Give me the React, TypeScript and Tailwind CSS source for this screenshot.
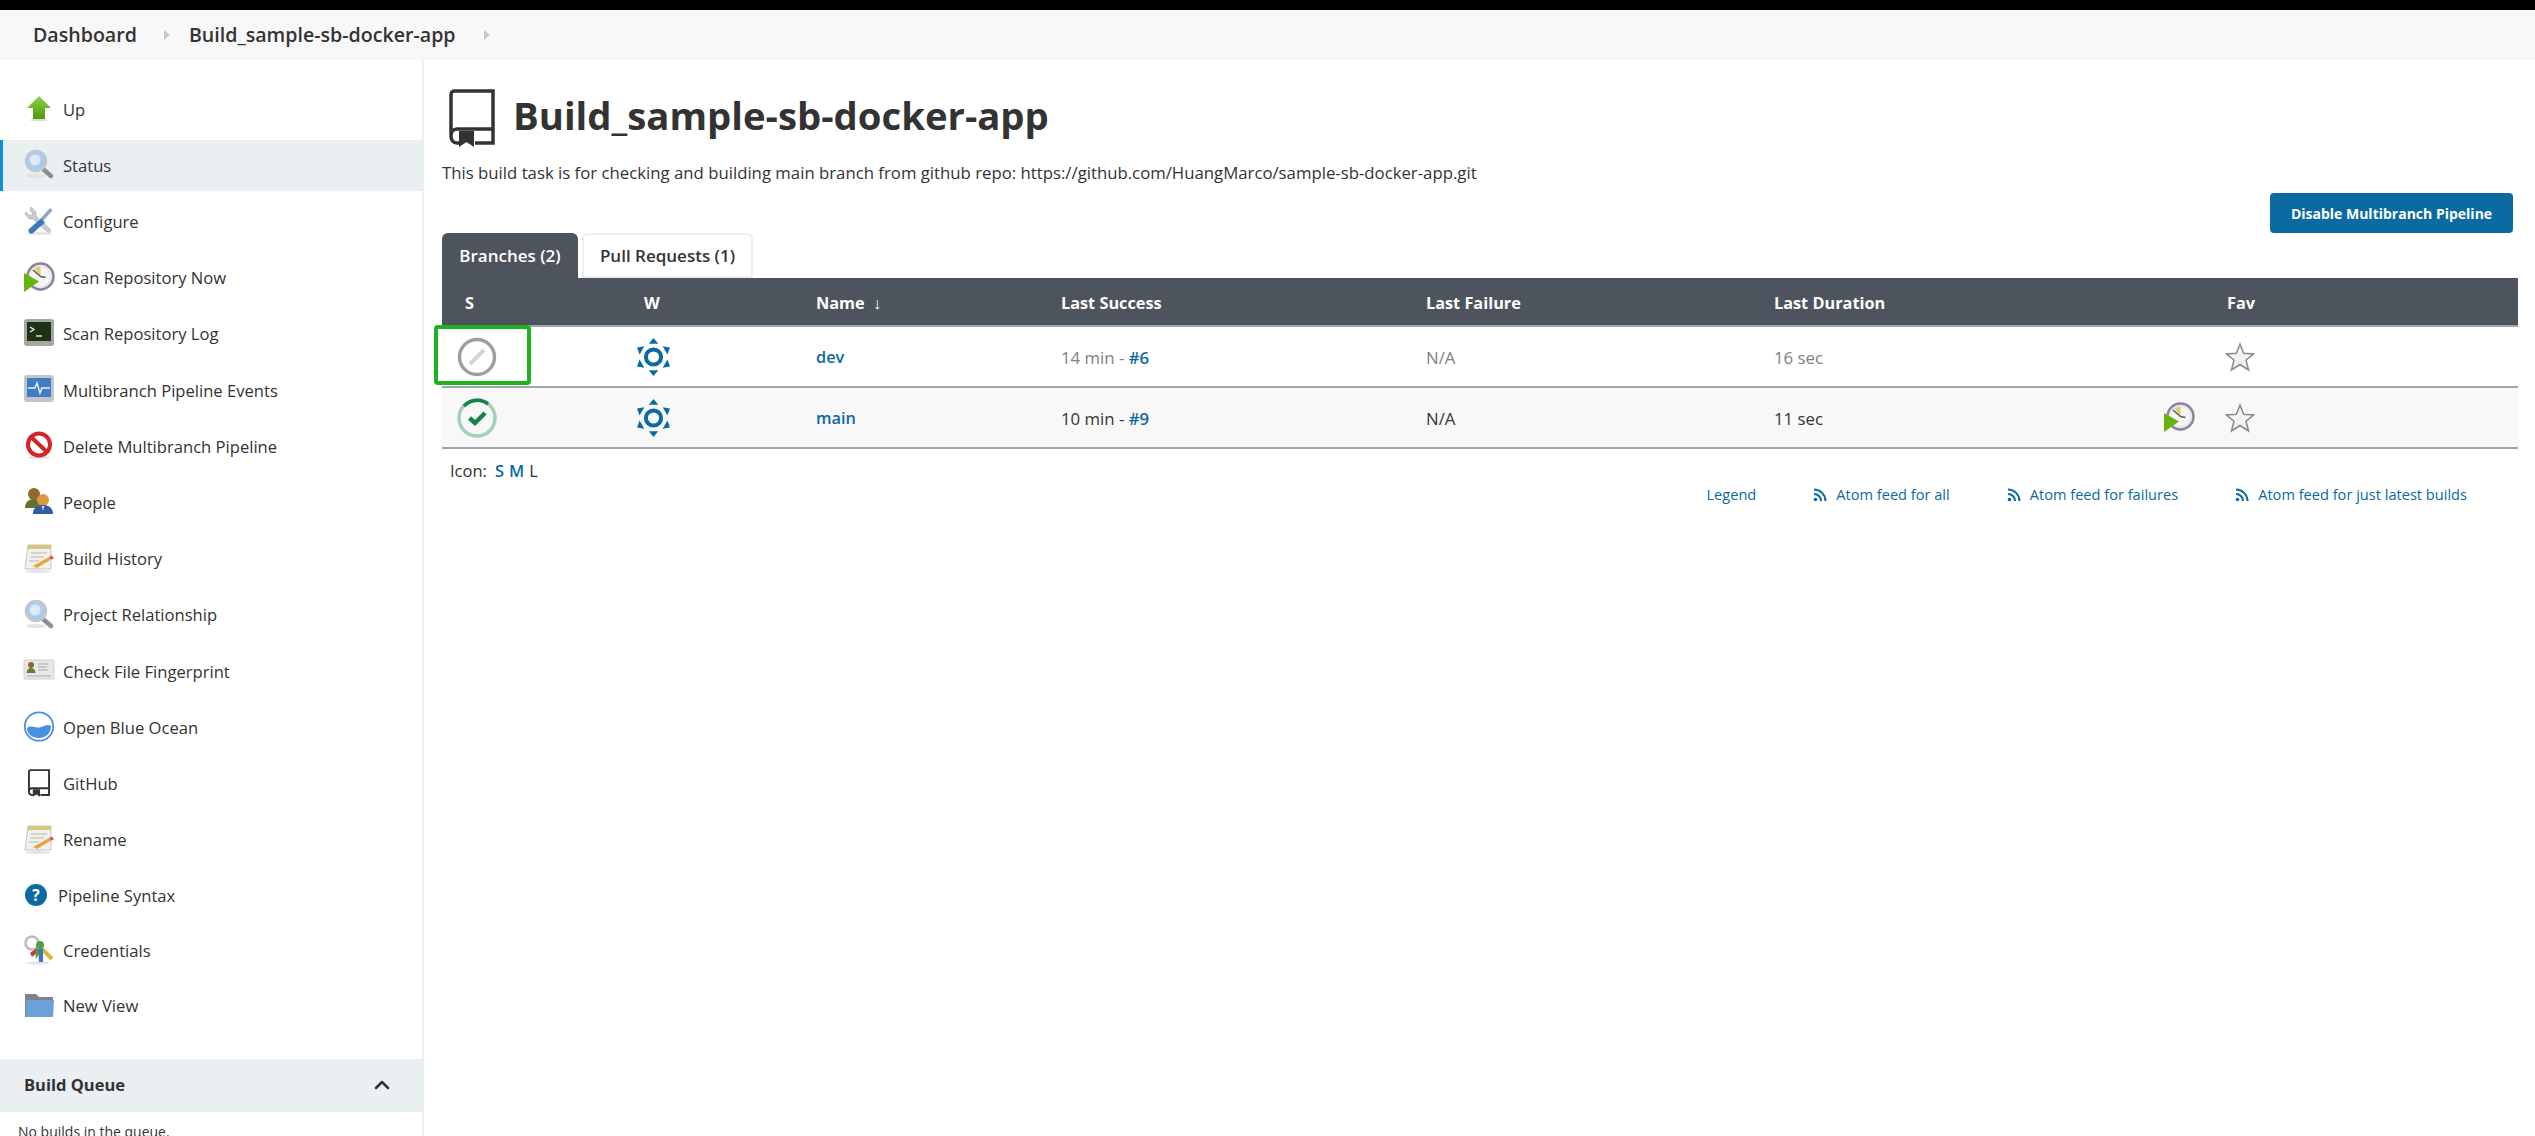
import type { ReactNode } from "react";
import { ChevronUp } from "lucide-react";

const font = "font-['Open_Sans',sans-serif]";

function Up() {
  return (
    <svg viewBox="0 0 32 32" className="h-8 w-8">
      <defs>
        <linearGradient id="up" x1="0" y1="0" x2="0" y2="1">
          <stop offset="0" stopColor="#8fd14f" />
          <stop offset="1" stopColor="#4e9a06" />
        </linearGradient>
      </defs>
      <ellipse cx="16" cy="27" rx="9" ry="1.5" fill="#ddd" />
      <path d="M16 3 28 15h-6v11H10V15H4z" fill="url(#up)" />
    </svg>
  );
}

function Search() {
  return (
    <svg viewBox="0 0 32 32" className="h-8 w-8">
      <ellipse cx="13" cy="27" rx="10" ry="2" fill="#e0e2e4" />
      <path d="M20 20l8 7" stroke="#8a8f94" strokeWidth="4.5" strokeLinecap="round" />
      <circle cx="13" cy="12" r="10" fill="#a9cbee" stroke="#c3c7ca" strokeWidth="2.5" />
      <circle cx="12" cy="11" r="5.5" fill="#dcebf9" />
    </svg>
  );
}

function Tools() {
  return (
    <svg viewBox="0 0 32 32" className="h-8 w-8">
      <ellipse cx="16" cy="28.5" rx="13" ry="1.5" fill="#e2e2e2" />
      <path d="M8 2l5 5v4L28 25l-2.5 3L10 14H6L2 9l1-2 4 4 3-2-3-4z" fill="#c9ccce" stroke="#a4a8ab" strokeWidth="0.6" />
      <path d="M27 3l2.5 2.5L20 16l-2.5-2.5z" fill="#8fa6bc" />
      <path d="M18 13.5l4 4L10 28c-2.5 2-6-1.5-4-4z" fill="#3b78b8" />
    </svg>
  );
}

function Clock() {
  return (
    <svg viewBox="0 0 32 32" className="h-8 w-8">
      <circle cx="17.5" cy="14.5" r="13" fill="#e9e7ec" stroke="#8d7f9e" strokeWidth="2.4" />
      <circle cx="17.5" cy="14.5" r="9.5" fill="#f6f6f6" />
      <path d="M17.5 14.5V4.5a10 10 0 0 0-6 2z" fill="#e3cd72" />
      <path d="M17.5 14.5 10 8M17.5 14.5l5 1" stroke="#5a5a5a" strokeWidth="1.5" />
      <path d="M1 11l15 8.5L1 30z" fill="#66b50f" />
    </svg>
  );
}

function Terminal() {
  return (
    <svg viewBox="0 0 32 32" className="h-8 w-8">
      <rect x="1" y="1" width="30" height="27" rx="3" fill="#a3a6a2" />
      <rect x="4" y="4" width="24" height="19" fill="#1e3315" />
      <path d="M7 9l4 2.5-4 2.5" fill="none" stroke="#e8efe4" strokeWidth="1.4" />
      <path d="M13 18h6" stroke="#e8efe4" strokeWidth="1.4" />
      <rect x="22" y="25" width="2" height="1.5" fill="#8fd14f" />
    </svg>
  );
}

function Monitor() {
  return (
    <svg viewBox="0 0 32 32" className="h-8 w-8">
      <rect x="1" y="1" width="30" height="27" rx="3" fill="#c3c6c9" />
      <rect x="4" y="4" width="24" height="19" fill="#3f7cc4" />
      <path d="M5 14h7l2-5 3 10 2-5h8" fill="none" stroke="#e8f2fb" strokeWidth="1.5" />
    </svg>
  );
}

function NoEntry() {
  return (
    <svg viewBox="0 0 32 32" className="h-8 w-8">
      <ellipse cx="16" cy="27.5" rx="11" ry="1.5" fill="#ddd" />
      <circle cx="16" cy="14.5" r="11" fill="#fff" stroke="#d5232a" strokeWidth="4" />
      <path d="M8 7l16 15" stroke="#d5232a" strokeWidth="4" />
    </svg>
  );
}

function People() {
  return (
    <svg viewBox="0 0 32 32" className="h-8 w-8">
      <circle cx="11" cy="8" r="6" fill="#8f6a2c" />
      <path d="M2 22c0-6 4-9 9-9s9 3 9 9z" fill="#5f7034" />
      <circle cx="20" cy="14" r="6" fill="#e0993a" />
      <path d="M10 28c0-6 4-9 10-9s10 3 10 9z" fill="#2f5f9f" />
      <path d="M19 20h2l-1 5z" fill="#fff" />
    </svg>
  );
}

function Notepad() {
  return (
    <svg viewBox="0 0 32 32" className="h-8 w-8">
      <ellipse cx="15" cy="28.5" rx="13" ry="1.5" fill="#e2e2e2" />
      <path d="M5 2h23v24H2z" fill="#f1f1ec" stroke="#c6c6c0" />
      <rect x="5" y="2" width="23" height="4" fill="#d8c57e" />
      <path d="M8 10h16M7 14h14M6 18h10" stroke="#b9b9b4" strokeWidth="1.2" />
      <path d="M10 23l16-9 2 2.5-14 8.5z" fill="#e8a53d" />
      <path d="M26 14l3-1.5 2 3-3 1z" fill="#d9534f" />
    </svg>
  );
}

function Card() {
  return (
    <svg viewBox="0 0 32 32" className="h-8 w-8">
      <rect x="1" y="5" width="30" height="19" rx="1" fill="#e8e8e6" stroke="#cfcfcd" />
      <circle cx="8" cy="10" r="3" fill="#8a6a28" />
      <path d="M3.5 18c0-3 2-5 4.5-5s4.5 2 4.5 5z" fill="#6d7a35" />
      <path d="M15 9h11M15 12h9M15 15h10M4 21h24" stroke="#a9a9a6" strokeWidth="1" />
    </svg>
  );
}

function Ocean() {
  return (
    <svg viewBox="0 0 32 32" className="h-8 w-8">
      <circle cx="16" cy="15.5" r="14.2" fill="#fff" stroke="#4a90e2" strokeWidth="1.8" />
      <path d="M4 17c5-4 9 1 14-1s7-3 10-1c0 7-5 12-12 12S4 23 4 17z" fill="#4a90e2" />
    </svg>
  );
}

function Book({ className, strokeWidth = 3.5 }: { className: string; strokeWidth?: number }) {
  return (
    <svg viewBox="0 0 46 58" className={className}>
      <path
        d="M44 40H8C4 40 2 43 2 47s2 7 6 7h2M26 54h18V2H6C3 2 2 3 2 6v41"
        fill="none"
        stroke="#333"
        strokeWidth={strokeWidth}
      />
      <path d="M10 42h15v16l-7.5-5-7.5 5z" fill="#333" />
    </svg>
  );
}

function Question() {
  return (
    <svg viewBox="0 0 24 24" className="h-[22px] w-[22px]">
      <circle cx="12" cy="12" r="12" fill="#0b6aa2" />
      <text x="12" y="18" textAnchor="middle" fontSize="17" fontWeight="700" fill="#fff" fontFamily="Open Sans">
        ?
      </text>
    </svg>
  );
}

function Keys() {
  return (
    <svg viewBox="0 0 32 32" className="h-8 w-8">
      <ellipse cx="15" cy="29" rx="12" ry="1.5" fill="#e2e2e2" />
      <circle cx="9" cy="9" r="6.5" fill="none" stroke="#b9bcbf" strokeWidth="2.5" />
      <path d="M17 13l12 12" stroke="#d9b93c" strokeWidth="4" />
      <circle cx="17" cy="11" r="4" fill="#46a546" />
      <path d="M7 19l7-5 2 3-7 6z" fill="#d9322e" />
      <path d="M12 17l3-2 1 5-3 5z" fill="#46a546" />
      <path d="M15 15h5v13h-4z" fill="#3b78b8" />
    </svg>
  );
}

function Folder() {
  return (
    <svg viewBox="0 0 32 32" className="h-8 w-8">
      <path d="M2 4h11l3 3h14v20H2z" fill="#7f8386" />
      <path d="M3 10h28l-1 17H3z" fill="#6d9fd8" />
    </svg>
  );
}

function Weather() {
  const tris = [0, 60, 120, 180, 240, 300];
  return (
    <svg viewBox="0 0 36 42" className="h-[40px] w-[35px]">
      <circle cx="18" cy="21" r="8" fill="none" stroke="#0b6aa2" strokeWidth="4.2" />
      {tris.map((a) => (
        <path key={a} d="M18 1l5 6H13z" fill="#0b6aa2" transform={`rotate(${a} 18 21)`} />
      ))}
    </svg>
  );
}

function Star() {
  return (
    <svg viewBox="0 0 30 30" className="h-[30px] w-[30px]">
      <path
        d="M15 2l3.7 9.3 10 .6-7.7 6.3 2.6 9.8-8.6-5.5L6.4 28 9 18.2 1.3 11.9l10-.6z"
        fill="#f2f2f2"
        stroke="#8a8a8a"
        strokeWidth="1.5"
      />
    </svg>
  );
}

function Rss() {
  return (
    <svg viewBox="0 0 14 14" className="h-[14px] w-[14px]" fill="none" stroke="#0b6aa2" strokeWidth="2">
      <circle cx="2.5" cy="11.5" r="1.8" fill="#0b6aa2" stroke="none" />
      <path d="M1 6a7 7 0 0 1 7 7M1 1.5A11.5 11.5 0 0 1 12.5 13" />
    </svg>
  );
}

function Crumb() {
  return (
    <svg viewBox="0 0 6 10" className="h-[10px] w-[6px]">
      <path d="M0 0l6 5-6 5z" fill="#c8c8c8" />
    </svg>
  );
}

const menu: { label: string; icon: ReactNode; active?: boolean }[] = [
  { label: "Up", icon: <Up /> },
  { label: "Status", icon: <Search />, active: true },
  { label: "Configure", icon: <Tools /> },
  { label: "Scan Repository Now", icon: <Clock /> },
  { label: "Scan Repository Log", icon: <Terminal /> },
  { label: "Multibranch Pipeline Events", icon: <Monitor /> },
  { label: "Delete Multibranch Pipeline", icon: <NoEntry /> },
  { label: "People", icon: <People /> },
  { label: "Build History", icon: <Notepad /> },
  { label: "Project Relationship", icon: <Search /> },
  { label: "Check File Fingerprint", icon: <Card /> },
  { label: "Open Blue Ocean", icon: <Ocean /> },
  { label: "GitHub", icon: <Book className="h-[28px] w-[22px]" strokeWidth={4} /> },
  { label: "Rename", icon: <Notepad /> },
];

function Sidebar() {
  return (
    <aside className="flex h-[1076px] w-[424px] shrink-0 flex-col overflow-hidden border-r-2 border-[#eaeff2] pt-[21px]">
      {menu.map((m) => (
        <div
          key={m.label}
          className={`flex h-[56.2px] shrink-0 items-center gap-[8px] pl-[23px] text-[16.6px] text-[#333] ${
            m.active ? "my-[2.6px] !h-[51px] border-l-[3px] border-[#0b8ee0] bg-[#eaeff2] !pl-[20px]" : ""
          }`}
        >
          <span className="flex h-8 w-8 items-center justify-center">{m.icon}</span>
          <span className="pt-[2px]">{m.label}</span>
        </div>
      ))}
      <div className="flex h-[55px] shrink-0 items-center gap-[11px] pl-[25px] text-[16.6px] text-[#333]">
        <Question />
        <span className="pt-[2px]">Pipeline Syntax</span>
      </div>
      <div className="flex h-[55.5px] shrink-0 items-center gap-[8px] pl-[23px] text-[16.6px] text-[#333]">
        <Keys />
        <span className="pt-[2px]">Credentials</span>
      </div>
      <div className="flex h-[55.5px] shrink-0 items-center gap-[8px] pl-[23px] text-[16.6px] text-[#333]">
        <Folder />
        <span className="pt-[2px]">New View</span>
      </div>
      <div className="mt-[25px] flex h-[53px] shrink-0 items-center justify-between bg-[#eaeff2] pl-[24px] pr-[28px]">
        <span className="text-[16.5px] font-bold text-[#333]">Build Queue</span>
        <ChevronUp className="h-[24px] w-[24px] text-[#333]" strokeWidth={2.5} />
      </div>
      <div className="pl-[18px] pt-[9px] text-[14px] text-[#333]">No builds in the queue.</div>
    </aside>
  );
}

const rows = [
  { name: "dev", status: "off", success: "14 min", run: "#6", duration: "16 sec", scan: false },
  { name: "main", status: "ok", success: "10 min", run: "#9", duration: "11 sec", scan: true },
];

function Status({ kind }: { kind: string }) {
  if (kind === "off") {
    return (
      <svg viewBox="0 0 40 40" className="h-[40px] w-[40px]">
        <circle cx="20" cy="20" r="17.5" fill="none" stroke="#9e9e9e" strokeWidth="3.5" />
        <path d="M13 27l14-14" stroke="#d6d6d6" strokeWidth="4" />
      </svg>
    );
  }
  return (
    <svg viewBox="0 0 40 40" className="h-[40px] w-[40px]">
      <circle cx="20" cy="20" r="18" fill="none" stroke="#a3d0b8" strokeWidth="3.5" />
      <path d="M7 8A18 18 0 0 1 31 6" fill="none" stroke="#138347" strokeWidth="3.5" />
      <path d="M12.5 20l5.5 5 10-10" fill="none" stroke="#138347" strokeWidth="4.5" />
    </svg>
  );
}

function BranchTable() {
  return (
    <table className="w-full table-fixed border-collapse text-[16.8px]">
      <colgroup>
        <col className="w-[202px]" />
        <col className="w-[172px]" />
        <col className="w-[245px]" />
        <col className="w-[365px]" />
        <col className="w-[348px]" />
        <col className="w-[394px]" />
        <col />
      </colgroup>
      <thead>
        <tr className="h-[48px] border-b-2 border-[#9aa7af] bg-[#4d545d] text-left text-[16.3px] font-bold text-white">
          <th className="pl-[23px] pt-[3px]">S</th>
          <th className="pt-[3px]">W</th>
          <th className="pt-[3px]">
            Name <span className="ml-[4px] font-normal">↓</span>
          </th>
          <th className="pt-[3px]">Last Success</th>
          <th className="pt-[3px]">Last Failure</th>
          <th className="pt-[3px]">Last Duration</th>
          <th className="pl-[59px] pt-[3px]">Fav</th>
        </tr>
      </thead>
      <tbody>
        {rows.map((r, i) => {
          const muted = i === 0 ? "text-[#808080]" : "text-[#333]";
          return (
            <tr key={r.name} className={`h-[61px] border-b-2 border-[#9aa7af] ${i % 2 ? "bg-[#f8f8f8]" : "bg-white"}`}>
              <td className="pl-[15px]">
                <div className="flex items-center">
                  <Status kind={r.status} />
                </div>
              </td>
              <td>
                <div className="-ml-[8px] flex">
                  <Weather />
                </div>
              </td>
              <td className="pt-[2px] text-[16.3px] font-semibold text-[#0b6aa2]">{r.name}</td>
              <td className={`pt-[2px] ${muted}`}>
                {r.success} - <span className="font-semibold text-[#0b6aa2]">{r.run}</span>
              </td>
              <td className={`pt-[2px] ${muted}`}>N/A</td>
              <td className={`pt-[2px] ${muted}`}>{r.duration}</td>
              <td>
                <div className="flex items-center justify-between">
                  <span className="-ml-[5px] flex w-[38px]">{r.scan ? <Clock /> : null}</span>
                  <span className="mr-[263px]">
                    <Star />
                  </span>
                </div>
              </td>
            </tr>
          );
        })}
      </tbody>
    </table>
  );
}

export default function App() {
  return (
    <div className={`${font} flex h-[1136px] w-[2535px] flex-col overflow-hidden bg-white`}>
      <div className="h-[10px] shrink-0 bg-black" />
      <nav className="flex h-[50px] shrink-0 items-center bg-[#f8f8f8] pl-[33px] text-[19.6px] font-semibold text-[#333]">
        <span>Dashboard</span>
        <span className="ml-[27px] mr-[19px] flex">
          <Crumb />
        </span>
        <span>Build_sample-sb-docker-app</span>
        <span className="ml-[28px] flex">
          <Crumb />
        </span>
      </nav>
      <div className="flex min-h-0 flex-1">
        <Sidebar />
        <main className="relative min-w-0 flex-1 pl-[18px] pr-[17px]">
          <div className="flex items-center gap-[18px] pl-[7px] pt-[29px]">
            <Book className="h-[58px] w-[46px]" />
            <h1 className="mb-[6px] text-[38.3px] font-bold leading-[52px] text-[#333]">Build_sample-sb-docker-app</h1>
          </div>
          <p className="mt-[15px] text-[16.75px] leading-[22px] text-[#333]">
            This build task is for checking and building main branch from github repo: https://github.com/HuangMarco/sample-sb-docker-app.git
          </p>
          <div className="flex justify-end pr-[5px]">
            <button className="mt-[9px] h-[40px] w-[243px] rounded-[4px] bg-[#0b6aa2] text-[14px] font-bold text-white">
              Disable Multibranch Pipeline
            </button>
          </div>
          <div className="flex gap-[4px]">
            <div className="flex h-[45px] w-[136px] items-center justify-center rounded-t-[6px] bg-[#4d545d] text-[17px] font-semibold text-white">
              Branches (2)
            </div>
            <div className="flex h-[45px] w-[171px] items-center justify-center rounded-t-[6px] border-2 border-[#eaeff2] text-[17px] font-semibold text-[#333]">
              Pull Requests (1)
            </div>
          </div>
          <BranchTable />
          <div className="mt-[10px] flex items-center gap-[8px] pl-[8px] text-[16.5px] text-[#333]">
            <span>Icon:</span>
            <span className="flex gap-[5px]">
              <span className="font-semibold text-[#0b6aa2]">S</span>
              <span className="font-semibold text-[#0b6aa2]">M</span>
              <span>L</span>
            </span>
          </div>
          <div className="flex justify-end gap-[57px] pr-[51px] text-[14.6px] text-[#0b6aa2]">
            <span>Legend</span>
            <span className="flex items-center gap-[9px]">
              <Rss /> Atom feed for all
            </span>
            <span className="flex items-center gap-[9px]">
              <Rss /> Atom feed for failures
            </span>
            <span className="flex items-center gap-[9px]">
              <Rss /> Atom feed for just latest builds
            </span>
          </div>
          <div className="absolute left-[10px] top-[265px] h-[60px] w-[97px] rounded-[4px] border-[4px] border-[#1fb11f]" />
        </main>
      </div>
    </div>
  );
}
